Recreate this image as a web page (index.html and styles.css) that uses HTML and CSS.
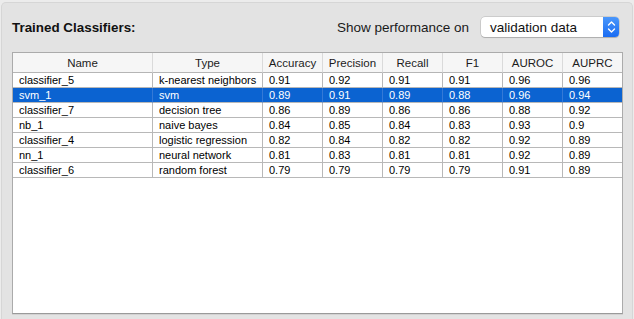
FILE: index.html
```html
<!DOCTYPE html>
<html lang="en">
<head>
    <meta charset="UTF-8">
    <title>Trained Classifiers</title>
    <link rel="stylesheet" href="styles.css">
</head>
<body>

    <div class="panel">
        <!-- Title and data picker -->
        <div class="toolbar">
            <div class="title">Trained Classifiers:</div>
            <div class="picker">
                <span class="picker-label">Show performance on</span>
                <div class="select">
                    <span class="select-value">validation data</span>
                    <span class="stepper">
                        <svg width="9" height="14" viewBox="0 0 9 14">
                            <path d="M1.5 5 L4.5 2 L7.5 5" fill="none" stroke="#fff" stroke-width="1.4" stroke-linecap="round" stroke-linejoin="round"/>
                            <path d="M1.5 9 L4.5 12 L7.5 9" fill="none" stroke="#fff" stroke-width="1.4" stroke-linecap="round" stroke-linejoin="round"/>
                        </svg>
                    </span>
                </div>
            </div>
        </div>

        <!-- Classifier table -->
        <div class="table-box">
            <table class="grid">
                <thead>
                    <tr>
                        <th class="col-name">Name</th>
                        <th class="col-type">Type</th>
                        <th class="col-num">Accuracy</th>
                        <th class="col-num">Precision</th>
                        <th class="col-num">Recall</th>
                        <th class="col-num">F1</th>
                        <th class="col-num">AUROC</th>
                        <th class="col-last">AUPRC</th>
                    </tr>
                </thead>
                <tbody>
                    <tr><td>classifier_5</td><td>k-nearest neighbors</td><td>0.91</td><td>0.92</td><td>0.91</td><td>0.91</td><td>0.96</td><td>0.96</td></tr>
                    <tr class="selected"><td>svm_1</td><td>svm</td><td>0.89</td><td>0.91</td><td>0.89</td><td>0.88</td><td>0.96</td><td>0.94</td></tr>
                    <tr><td>classifier_7</td><td>decision tree</td><td>0.86</td><td>0.89</td><td>0.86</td><td>0.86</td><td>0.88</td><td>0.92</td></tr>
                    <tr><td>nb_1</td><td>naive bayes</td><td>0.84</td><td>0.85</td><td>0.84</td><td>0.83</td><td>0.93</td><td>0.9</td></tr>
                    <tr><td>classifier_4</td><td>logistic regression</td><td>0.82</td><td>0.84</td><td>0.82</td><td>0.82</td><td>0.92</td><td>0.89</td></tr>
                    <tr><td>nn_1</td><td>neural network</td><td>0.81</td><td>0.83</td><td>0.81</td><td>0.81</td><td>0.92</td><td>0.89</td></tr>
                    <tr><td>classifier_6</td><td>random forest</td><td>0.79</td><td>0.79</td><td>0.79</td><td>0.79</td><td>0.91</td><td>0.89</td></tr>
                </tbody>
            </table>
        </div>
    </div>

</body>
</html>
```

FILE: styles.css
```css
/* General Reset */
* {
    margin: 0;
    padding: 0;
    box-sizing: border-box;
}

body {
    font-family: "Liberation Sans", Arial, sans-serif;
    background-color: #ececec;
    color: #000;
    height: 319px;
    overflow: hidden;
}

/* Outer group box (its bottom edge is off screen) */
.panel {
    margin: 2px 1px 0 1px;
    height: 317px;
    padding: 14px 10px 0 10px;
    background-color: #e3e3e3;
    border: 1px solid #d6d6d6;
    border-bottom: none;
    border-radius: 5px 5px 0 0;
}

/* Title row */
.toolbar {
    display: flex;
    justify-content: space-between;
    align-items: center;
    height: 20px;
    padding-right: 3px;
}

.title {
    font-size: 13.4px;
    font-weight: bold;
    color: #111;
    padding-top: 1px;
}

.picker {
    display: flex;
    align-items: center;
    gap: 12px;
}

.picker-label {
    font-size: 13.5px;
    color: #1a1a1a;
}

/* Popup button */
.select {
    display: flex;
    align-items: center;
    justify-content: space-between;
    width: 138px;
    height: 20px;
    padding-left: 9px;
    background-color: #fff;
    border-radius: 4px;
    box-shadow: 0 0 0 0.5px rgba(0, 0, 0, 0.2), 0 1px 1px rgba(0, 0, 0, 0.15);
}

.select-value {
    font-size: 13.5px;
    color: #111;
}

.stepper {
    display: flex;
    align-items: center;
    justify-content: center;
    width: 16px;
    height: 20px;
    border-radius: 0 4px 4px 0;
    background: linear-gradient(#4a97fb, #1a6cf2);
}

/* Table scroll view */
.table-box {
    margin-top: 15px;
    width: 611px;
    height: 262px;
    background-color: #fff;
    border: 1px solid #ababab;
    border-bottom-color: #9a9a9a;
    box-shadow: 0 1px 0 #d2d2d2;
}

.grid {
    table-layout: fixed;
    border-collapse: separate;
    border-spacing: 0;
    width: 609px;
}

.grid th {
    height: 20px;
    font-size: 11.5px;
    font-weight: normal;
    color: #1c1c1c;
    text-align: center;
    background-color: #f6f6f6;
    border-right: 1px solid #dadada;
    border-bottom: 1px solid #b5b5b5;
    padding-top: 1px;
}

.grid .col-name { width: 140px; }
.grid .col-type { width: 110px; }
.grid .col-num { width: 60px; }
.grid .col-last { width: 59px; border-right: none; }

.grid td {
    height: 15px;
    font-size: 11px;
    line-height: 14px;
    padding: 0 5px 0 6px;
    white-space: nowrap;
    overflow: hidden;
    border-right: 1px solid #b8b8b8;
    border-bottom: 1px solid #b8b8b8;
}

.grid td:last-child {
    border-right: none;
}

/* Selected row */
.grid tr.selected td {
    background-color: #0b63d1;
    color: #fff;
    border-right-color: #3479d6;
    border-bottom-color: #b8b8b8;
}
```
